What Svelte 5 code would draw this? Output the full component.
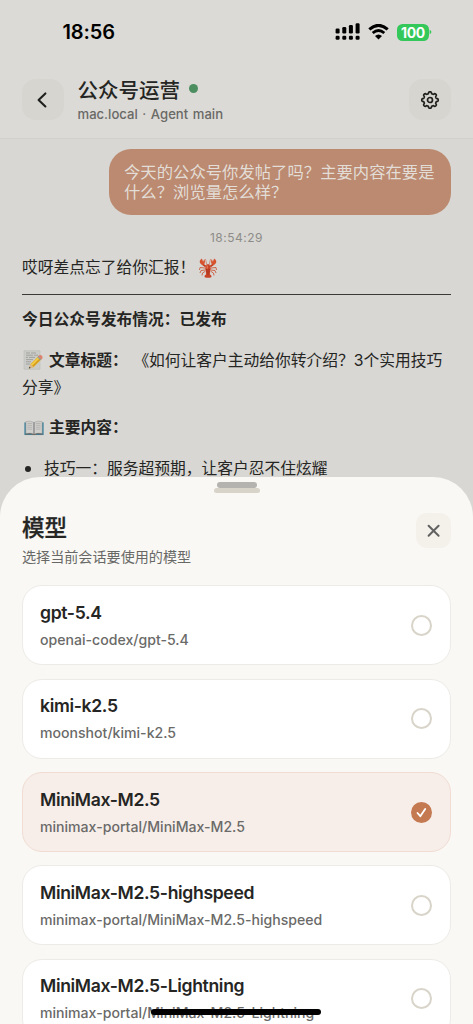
<script>
    let selected = $state('minimax-portal/MiniMax-M2.5');

    const models = [
        { name: 'gpt-5.4', path: 'openai-codex/gpt-5.4' },
        { name: 'kimi-k2.5', path: 'moonshot/kimi-k2.5' },
        { name: 'MiniMax-M2.5', path: 'minimax-portal/MiniMax-M2.5' },
        { name: 'MiniMax-M2.5-highspeed', path: 'minimax-portal/MiniMax-M2.5-highspeed' },
        { name: 'MiniMax-M2.5-Lightning', path: 'minimax-portal/MiniMax-M2.5-Lightning' },
    ];

    // gear outline with eight rounded teeth
    const gearPoints = Array.from({ length: 128 }, (_, i) => {
        const angle = (i / 128) * Math.PI * 2;
        const r = 7.3 + 0.9 * Math.tanh(2.4 * Math.cos(angle * 8));
        return `${(10 + r * Math.cos(angle)).toFixed(2)},${(10 + r * Math.sin(angle)).toFixed(2)}`;
    }).join(' ');
</script>

<div class="phone">
    <div class="status-bar">
        <span class="clock">18:56</span>
        <div class="status-icons">
            <svg class="signal" width="25" height="18" viewBox="0 0 25 18">
                <rect x="0.6" y="5.5" width="4" height="5" rx="1.3" />
                <rect x="7.3" y="4" width="4" height="6.5" rx="1.3" />
                <rect x="13.9" y="2" width="4" height="8.5" rx="1.3" />
                <rect x="20.6" y="0.2" width="4" height="10.3" rx="1.3" />
                <rect x="0.6" y="12.8" width="4" height="4" rx="1.3" />
                <rect x="7.3" y="12.8" width="4" height="4" rx="1.3" />
                <rect x="13.9" y="12.8" width="4" height="4" rx="1.3" />
                <rect x="20.6" y="12.8" width="4" height="4" rx="1.3" />
            </svg>
            <svg class="wifi" width="21" height="16" viewBox="0 0 21 16">
                <path d="M1.3 5.4Q10.5-2.7 19.7 5.4" fill="none" stroke="#000" stroke-width="3" />
                <path d="M4.7 9Q10.5 4 16.3 9" fill="none" stroke="#000" stroke-width="2.8" />
                <path d="M7 12Q10.5 9 14 12L10.5 15.6Z" />
            </svg>
            <div class="battery"><span>100</span></div>
            <svg width="3" height="6" viewBox="0 0 3 6"><path d="M0.6 0.7Q2.4 1.5 2.4 3T0.6 5.3Z" fill="#34c759" /></svg>
        </div>
    </div>

    <header>
        <button class="square" aria-label="back">
            <svg width="42" height="42" viewBox="0 0 42 42">
                <path d="M23.4 14.4L16.6 20.9L23.4 27.5" fill="none" stroke="#1f1f1d" stroke-width="2.1" stroke-linecap="round" stroke-linejoin="round" />
            </svg>
        </button>
        <div class="heading">
            <div class="title">公众号运营<i></i></div>
            <div class="host">mac.local · Agent main</div>
        </div>
        <button class="square" aria-label="settings">
            <svg width="20" height="20" viewBox="0 0 20 20" fill="none" stroke="#20201e" stroke-width="1.7" stroke-linejoin="round">
                <polygon points={gearPoints} />
                <circle cx="10" cy="10" r="2.5" />
            </svg>
        </button>
    </header>

    <main>
        <div class="bubble">今天的公众号你发帖了吗？主要内容在要是什么？浏览量怎么样？</div>
        <div class="time">18:54:29</div>
        <div class="reply">
            <p class="greeting">哎呀差点忘了给你汇报！
                <svg class="lobster" width="18" height="20" viewBox="0 0 18 20">
                    <g fill="none" stroke="#c84b2a" stroke-width="0.8">
                        <path d="M6 10L1 9.5 .5 12M6 12L2 12.5 1 15M6 13.5L3.5 15 3 17.5M12 10l5-.5.5 2.5M12 12l4 .5 1 2.5M12 13.5l2.5 1.5.5 2.5" />
                        <path d="M7.8 7L6.5 1M10.2 7l1.3-6" stroke-width="0.5" />
                    </g>
                    <path d="M6.8 8.5L3.6 6.2M11.2 8.5l3.2-2.3" stroke="#c63d1d" stroke-width="1.8" />
                    <path d="M2.8 .5Q-.4 2.6 1.2 5.3Q3 8.1 5.1 6.2Q6.8 4 5.2.9L4.2 3.7ZM15.2.5Q18.4 2.6 16.8 5.3Q15 8.1 12.9 6.2Q11.2 4 12.8.9L13.8 3.7Z" fill="#d7532d" />
                    <path d="M9 5.8Q12.5 7.8 11.6 12L10.7 16.2Q13.2 17.3 12.2 19.2Q9 20.5 5.8 19.2Q4.8 17.3 7.3 16.2L6.4 12Q5.5 7.8 9 5.8Z" fill="#c94325" />
                    <path d="M7 11.6Q9 12.7 11 11.6M7.2 13.7Q9 14.7 10.8 13.7M7.5 15.8Q9 16.6 10.5 15.8" fill="none" stroke="#8f2818" stroke-width="0.6" />
                    <path d="M8.2 7.6v3" stroke="#ee8760" />
                </svg>
            </p>
            <hr />
            <p class="bold">今日公众号发布情况：已发布</p>
            <p class="article">
                <svg class="memo" width="21" height="20" viewBox="0 0 21 20">
                    <rect x="1" y="0.7" width="16" height="18.6" rx="0.6" fill="#cbcbc9" stroke="#b5b5b1" stroke-width="0.5" />
                    <path d="M3 3h4m1 0h5M3 5.2h7m1 0h4M3 7.4h2m1 0h6M3 9.6h7M3 11.8h5M3 14h4" stroke="#8f8f8a" stroke-width="0.7" />
                    <path d="M5.8 18.6L7.5 14.1L15.6 5.9L18.8 9.1L10.6 17.2Z" fill="#e6b52b" />
                    <path d="M8.4 15.1L16.5 7" stroke="#f3cf4d" stroke-width="1.2" />
                    <path d="M9.8 16.5L18 8.3" stroke="#bd821e" stroke-width="0.8" />
                    <path d="M14.8 6.6L16.2 5.2Q17.6 4.5 19 5.8Q20 7.2 19.3 8.3L17.9 9.7Z" fill="#dc826e" />
                    <path d="M14.3 7.2L15.2 6.3L18.3 9.4L17.4 10.3Z" fill="#929f9c" />
                    <path d="M5.8 18.6L7.5 14.1L10.6 17.2Z" fill="#d9b890" />
                    <path d="M5.8 18.6L6.5 16.8L7.7 17.9Z" fill="#343331" />
                </svg><b>文章标题：</b><span class="article-name">《如何让客户主动给你转介绍？3个实用技巧</span><br />分享》
            </p>
            <p class="content">
                <svg class="book" width="20" height="16" viewBox="0 0 21 16">
                    <path d="M.4 2.1H20.6V15.4H.4Z" fill="#3c819c" />
                    <path d="M2 1.2Q7-.1 10.5 2.3Q14-.1 19 1.2V13.8Q13.8 12.8 10.5 14.6Q7.2 12.8 2 13.8Z" fill="#d0cfcc" stroke="#999995" stroke-width="0.5" />
                    <path d="M3.5 3.2h5M3.5 5.2h5M3.5 7.2h5M3.5 9.2h5M12.5 3.2h5M12.5 5.2h5M12.5 7.2h5M12.5 9.2h5" stroke="#a8a8a5" stroke-width="0.7" />
                    <path d="M10.5 2.2v12.4" stroke="#787b7b" stroke-width="1.2" />
                    <path d="M1.5 14.6Q7 13 10.5 15Q14 13 19.5 14.6" fill="none" stroke="#73675f" />
                </svg>
                <b>主要内容：</b>
            </p>
            <ul>
                <li>技巧一：服务超预期，让客户忍不住炫耀</li>
            </ul>
        </div>
    </main>

    <section class="sheet">
        <div class="grabbers">
            <div class="grabber-top"></div>
            <div class="grabber-bottom"></div>
        </div>
        <div class="sheet-head">
            <div>
                <h2>模型</h2>
                <div class="hint">选择当前会话要使用的模型</div>
            </div>
            <button class="close" aria-label="close">
                <svg width="14" height="14" viewBox="0 0 14 14">
                    <path d="M1.6 1.8L11.6 11.8M11.6 1.8L1.6 11.8" stroke="#626262" stroke-width="2" stroke-linecap="round" />
                </svg>
            </button>
        </div>
        <div class="models">
            {#each models as model}
                <button class="card" class:active={selected === model.path} onclick={() => (selected = model.path)}>
                    <span class="info">
                        <span class="name">{model.name}</span>
                        <span class="path">{model.path}</span>
                    </span>
                    <span class="radio">
                        {#if selected === model.path}
                            <svg width="21" height="21" viewBox="0 0 21 21">
                                <path d="M6.5 11L9.3 14.2L14.2 6.9" fill="none" stroke="#fff" stroke-width="1.8" stroke-linecap="round" stroke-linejoin="round" />
                            </svg>
                        {/if}
                    </span>
                </button>
            {/each}
        </div>
    </section>

    <div class="home-indicator"></div>
</div>

<style>
    .phone {
        position: relative;
        width: 473px;
        height: 1024px;
        overflow: hidden;
        background: #d8d7d3;
        color: #252523;
        font-family: Inter, "Noto Sans CJK SC", sans-serif;
    }

    button {
        border: none;
        padding: 0;
        font: inherit;
        color: inherit;
    }

    svg {
        display: block;
    }

    .status-bar {
        display: flex;
        justify-content: space-between;
        align-items: center;
        box-sizing: border-box;
        height: 64px;
        padding: 0 41px 0 62.5px;
        background: #dcdad6;
        color: #000;
    }

    .clock {
        font-size: 20px;
        font-weight: 600;
        letter-spacing: -0.1px;
    }

    .status-icons {
        display: flex;
        align-items: center;
    }

    .signal {
        margin-right: 8px;
    }

    .wifi {
        margin-right: 8px;
    }

    .battery {
        display: flex;
        align-items: center;
        justify-content: center;
        width: 32px;
        height: 17px;
        border-radius: 5.5px;
        background: #34c759;
        color: #fff;
        font-size: 14px;
        font-weight: 700;
        letter-spacing: -0.3px;
    }

    header {
        display: flex;
        align-items: flex-start;
        box-sizing: border-box;
        height: 75px;
        padding: 15px 22px 0;
        border-bottom: 1px solid #d1d0cb;
        background: #dcdad6;
    }

    .square {
        display: flex;
        align-items: center;
        justify-content: center;
        width: 42px;
        height: 41px;
        border-radius: 14px;
        background: #d6d5cf;
    }

    .heading {
        flex: 1;
        padding-left: 13.5px;
    }

    .title {
        display: flex;
        align-items: center;
        height: 19px;
        font-size: 20.5px;
        font-weight: 500;
    }

    .title i {
        width: 9px;
        height: 9px;
        margin-left: 9px;
        border-radius: 50%;
        background: #4c8e60;
    }

    .host {
        margin-top: 8px;
        color: #696966;
        font-size: 13.1px;
        font-weight: 500;
        line-height: 17px;
        word-spacing: 1.1px;
    }

    main {
        padding: 10px 22px 0;
    }

    .bubble {
        box-sizing: border-box;
        width: 342px;
        height: 66px;
        margin-left: auto;
        padding: 13px 15px;
        border-radius: 22px;
        background: #bb8a70;
        color: #e3ddd7;
        font-size: 16.35px;
        line-height: 20px;
    }

    .time {
        margin-top: 14px;
        color: #8d8c88;
        font-size: 12px;
        line-height: 17px;
        letter-spacing: 0.5px;
        text-align: center;
    }

    .reply {
        font-size: 15.75px;
        line-height: 27px;
        white-space: nowrap;
    }

    p {
        margin: 0;
    }

    .greeting,
    .content {
        display: flex;
        align-items: center;
    }

    .greeting {
        margin-top: 8px;
    }

    .lobster {
        margin-left: 3.5px;
    }

    hr {
        height: 1px;
        margin: 13px 0 11px;
        border: none;
        background: #3a3a37;
    }

    .bold,
    b {
        font-weight: 700;
    }

    .article {
        margin-top: 14px;
    }

    .memo {
        display: inline-block;
        margin: 0 5px 0 1px;
        vertical-align: -4px;
    }

    .article-name {
        margin-left: 13.5px;
    }

    .content {
        margin-top: 13px;
    }

    .book {
        margin: 0 5.5px 0 1.5px;
    }

    ul {
        margin: 14px 0 0;
        padding: 0;
        list-style: none;
    }

    li {
        display: flex;
        align-items: center;
    }

    li::before {
        content: '';
        width: 6px;
        height: 6px;
        margin: 0 13px 0 3px;
        border-radius: 50%;
        background: #252523;
    }

    .sheet {
        position: absolute;
        top: 477px;
        left: 0;
        right: 0;
        height: 600px;
        border-radius: 40px 40px 0 0;
        background: #f9f8f4;
    }

    .grabbers {
        display: flex;
        flex-direction: column;
        align-items: center;
        padding-top: 5px;
    }

    .grabber-top {
        width: 40px;
        height: 6px;
        border-radius: 3px;
        background: #b5b3b0;
    }

    .grabber-bottom {
        width: 46px;
        height: 5px;
        border-radius: 3px;
        background: #d8d4c9;
    }

    .sheet-head {
        display: flex;
        justify-content: space-between;
        padding: 20px 22px 0;
    }

    h2 {
        margin: 0;
        font-size: 22.5px;
        font-weight: 500;
        line-height: 30px;
        -webkit-text-stroke: 0.3px #252523;
    }

    .hint {
        margin-top: 4px;
        color: #686866;
        font-size: 14.1px;
        line-height: 20px;
    }

    .close {
        display: flex;
        align-items: center;
        justify-content: center;
        width: 35px;
        height: 35px;
        border-radius: 11px;
        background: #f4f1eb;
    }

    .models {
        display: flex;
        flex-direction: column;
        gap: 13.4px;
        padding: 18.3px 22px 0;
    }

    .card {
        display: flex;
        align-items: center;
        justify-content: space-between;
        box-sizing: border-box;
        height: 80px;
        padding: 0 18px 0 17px;
        border: 1px solid #ecebe7;
        border-radius: 20px;
        background: #fff;
        text-align: left;
    }

    .card.active {
        border-color: #f1dcd3;
        background: #f7eeea;
    }

    .info {
        display: flex;
        flex-direction: column;
        gap: 7px;
    }

    .name {
        font-size: 17.6px;
        font-weight: 600;
        line-height: 22px;
        letter-spacing: -0.35px;
    }

    .path {
        color: #6a6a68;
        font-size: 14.1px;
        font-weight: 450;
        line-height: 18px;
    }

    .radio {
        box-sizing: border-box;
        width: 21px;
        height: 21px;
        border: 2px solid #d8d4c9;
        border-radius: 50%;
    }

    .active .radio {
        border: none;
        background: #c57950;
    }

    .home-indicator {
        position: absolute;
        left: 151px;
        top: 1009px;
        width: 170px;
        height: 6px;
        border-radius: 3px;
        background: #000;
    }
</style>
